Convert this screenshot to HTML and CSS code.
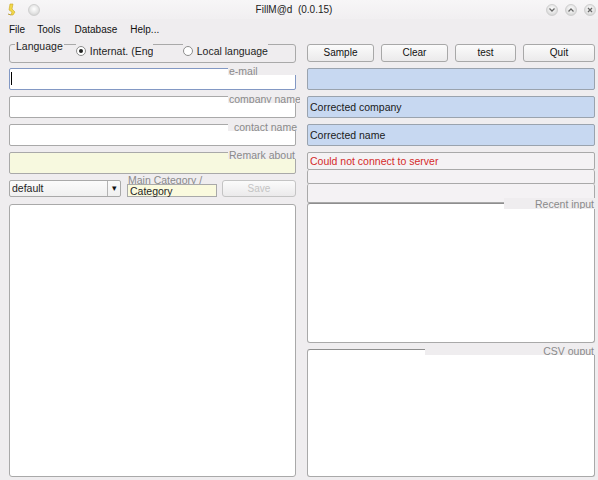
FILE: index.html
```html
<!DOCTYPE html>
<html>
<head>
<meta charset="utf-8">
<link rel="stylesheet" href="styles.css">
</head>
<body>
<div class="window">
  <div class="titlebar">
    <div class="tb-left">
      <svg class="app-icon" width="10" height="13" viewBox="0 0 10 13">
        <path d="M3 1 L6 1 L5 6 L8 9 L6 12 L4 12 L5 9 L2 7 Z" fill="#f2d84a" stroke="#c9a825" stroke-width="0.6"/>
        <path d="M1 11 L4 12" stroke="#b89b3a" stroke-width="1"/>
      </svg>
      <span class="roundbtn"></span>
    </div>
    <div class="title">FillM@d&nbsp;&nbsp;(0.0.15)</div>
    <div class="tb-right">
      <span class="roundbtn"><svg width="8" height="8" viewBox="0 0 8 8"><path d="M1.5 2.5 L4 5 L6.5 2.5" fill="none" stroke="#666" stroke-width="1.3"/></svg></span>
      <span class="roundbtn"><svg width="8" height="8" viewBox="0 0 8 8"><path d="M1.5 5.5 L4 3 L6.5 5.5" fill="none" stroke="#666" stroke-width="1.3"/></svg></span>
      <span class="roundbtn"><svg width="8" height="8" viewBox="0 0 8 8"><path d="M2 2 L6 6 M6 2 L2 6" fill="none" stroke="#666" stroke-width="1.3"/></svg></span>
    </div>
  </div>
  <div class="menubar">
    <span>File</span><span>Tools</span><span>Database</span><span>Help...</span>
  </div>
  <div class="content">
    <div class="col left">
      <div class="langbox">
        <span class="legend">Language</span>
        <span class="radio radio-intl"><span class="dot checked"></span><span class="rtext">Internat. (English)</span></span>
        <span class="radio radio-local"><span class="dot"></span><span class="rtext">Local language</span></span>
      </div>
      <div class="field focus"><span class="caret"></span><span class="flabel">e-mail</span></div>
      <div class="field"><span class="flabel">company name</span></div>
      <div class="field"><span class="flabel lbl-contact">contact name</span></div>
      <div class="field remark"><span class="flabel">Remark about</span></div>
      <div class="catrow">
        <div class="select"><span class="sel-text">default</span><span class="sel-arrow">&#9662;</span></div>
        <div class="catwrap">
          <span class="catlabel">Main Category /</span>
          <div class="catinput">Category</div>
        </div>
        <div class="btn disabled">Save</div>
      </div>
      <div class="area big"></div>
    </div>
    <div class="col right">
      <div class="buttons">
        <div class="btn b-sample">Sample</div>
        <div class="btn b-clear">Clear</div>
        <div class="btn b-test">test</div>
        <div class="btn b-quit">Quit</div>
      </div>
      <div class="field blue"></div>
      <div class="field blue">Corrected company</div>
      <div class="field blue">Corrected name</div>
      <div class="status">Could not connect to server</div>
      <div class="status s2"></div>
      <div class="status s3"></div>
      <div class="area recent"><span class="alabel">Recent input</span></div>
      <div class="area csv"><span class="alabel csv-label">CSV ouput</span></div>
    </div>
  </div>
</div>
</body>
</html>
```
FILE: styles.css
```css
* { box-sizing: border-box; }
html, body { margin: 0; padding: 0; }
body {
  font-family: "Liberation Sans", Arial, sans-serif;
  font-size: 10.5px;
  color: #1e1e1e;
  background: #efedef;
}
.window {
  width: 598px;
  height: 480px;
  background: #efedef;
  overflow: hidden;
}
.titlebar {
  height: 19px;
  background: linear-gradient(#f7f6f7, #f1eff1);
  display: flex;
  align-items: center;
}
.tb-left {
  display: flex;
  align-items: center;
  padding-left: 7px;
  gap: 11px;
  width: 80px;
}
.title {
  flex: 1;
  text-align: center;
  font-size: 10px;
  color: #222;
  padding-right: 10px;
}
.tb-right {
  display: flex;
  gap: 7px;
  padding-right: 2px;
  width: 80px;
  justify-content: flex-end;
}
.roundbtn {
  width: 12px;
  height: 12px;
  border-radius: 50%;
  background: radial-gradient(circle at 50% 40%, #ffffff 0%, #e4e4e4 55%, #c8c8c8 100%);
  border: 1px solid #cfcfcf;
  display: flex;
  align-items: center;
  justify-content: center;
}
.menubar {
  height: 20px;
  display: flex;
  align-items: center;
  padding-left: 9px;
  font-size: 10px;
  color: #111;
}
.menubar span:nth-child(1) { margin-right: 12px; }
.menubar span:nth-child(2) { margin-right: 14px; }
.menubar span:nth-child(3) { margin-right: 13px; }
.content {
  display: flex;
  padding: 5px 3px 0 9px;
  gap: 11px;
}
.col {
  display: flex;
  flex-direction: column;
}
.left { width: 287px; }
.right { width: 288px; }

/* Language group */
.langbox {
  height: 19px;
  border: 1px solid #a9a9a9;
  border-radius: 3px;
  display: flex;
  align-items: flex-start;
  margin-bottom: 5px;
}
.legend {
  margin-top: -5px;
  margin-left: 5px;
  padding: 0 1px;
  background: #efedef;
  line-height: 12px;
}
.radio {
  display: flex;
  align-items: center;
  margin-top: -1px;
  height: 13px;
  background: #efedef;
  overflow: hidden;
  line-height: 12px;
}
.radio-intl { margin-left: 12px; width: 77px; }
.radio-local { margin-left: 30px; width: 85px; }
.dot {
  width: 10px;
  height: 10px;
  border-radius: 50%;
  border: 1px solid #8d8d8d;
  background: #fff;
  margin-right: 4px;
  flex: none;
  display: flex;
  align-items: center;
  justify-content: center;
}
.dot.checked::after {
  content: "";
  width: 4px;
  height: 4px;
  border-radius: 50%;
  background: #222;
}
.rtext { white-space: nowrap; }

/* Fields */
.field {
  position: relative;
  height: 22px;
  border: 1px solid #a9a9a9;
  border-radius: 2px;
  background: #fff;
  margin-bottom: 6px;
  padding-left: 2px;
  line-height: 20px;
}
.field.focus { border-color: #8298c4; }
.caret {
  position: absolute;
  left: 1px;
  top: 3px;
  width: 1px;
  height: 13px;
  background: #000;
}
.field.remark { background: #f7f9df; }
.flabel {
  position: absolute;
  top: -4px;
  left: 218px;
  width: 72px;
  height: 10px;
  overflow: hidden;
  line-height: 12px;
  padding-left: 1px;
  background: #efedef;
  color: #8a8a8a;
  white-space: nowrap;
}
.flabel.lbl-contact { padding-left: 6px; width: 70px; }
.field.blue {
  background: #c7d8f1;
  border-color: #9aa3ae;
  color: #1a1a1a;
}

/* category row */
.catrow {
  display: flex;
  height: 18px;
  margin-bottom: 6px;
  align-items: flex-start;
}
.select {
  width: 112px;
  height: 17px;
  border: 1px solid #a9a9a9;
  border-radius: 2px;
  background: linear-gradient(#fbfbfb, #f0f0f0);
  display: flex;
  line-height: 15px;
}
.sel-text { flex: 1; padding-left: 2px; }
.sel-arrow {
  width: 13px;
  border-left: 1px solid #b4b4b4;
  text-align: center;
  font-size: 9px;
  color: #111;
}
.catwrap {
  width: 90px;
  margin-left: 6px;
  margin-top: -6px;
  display: flex;
  flex-direction: column;
}
.catlabel {
  height: 10px;
  line-height: 12px;
  overflow: hidden;
  color: #8a8a8a;
  white-space: nowrap;
  padding-left: 1px;
}
.catinput {
  height: 13px;
  border: 1px solid #a9a9a9;
  background: #fafade;
  line-height: 12px;
  padding-left: 2px;
}
.btn {
  height: 18px;
  border: 1px solid #a8a8a8;
  border-radius: 3px;
  background: linear-gradient(#fbfbfb, #ebeaeb);
  text-align: center;
  line-height: 16px;
  font-size: 10px;
  color: #111;
}
.catrow .btn {
  width: 74px;
  margin-left: auto;
  height: 17px;
  line-height: 15px;
}
.btn.disabled { color: #c4c4c4; border-color: #c4c4c4; }
.area {
  position: relative;
  border: 1px solid #a9a9a9;
  border-radius: 3px;
  background: #fff;
}
.area.big { height: 273px; }

/* right column */
.buttons {
  display: flex;
  gap: 7px;
  height: 18px;
  margin-bottom: 6px;
}
.b-sample, .b-clear { width: 67px; }
.b-test { width: 61px; }
.b-quit { flex: 1; }
.status {
  height: 18px;
  border: 1px solid #a9a9a9;
  border-radius: 2px;
  background: #f4f2f4;
  color: #d42a2a;
  line-height: 16px;
  padding-left: 2px;
}
.status.s2 { height: 14px; border-top: none; }
.status.s3 { height: 19px; border-top: none; }
.area.recent { height: 140px; margin-bottom: 6px; border-top-color: #8e8e8e; }
.area.csv { height: 128px; border-top-color: #8e8e8e; }
.alabel {
  position: absolute;
  right: -1px;
  top: -6px;
  width: 91px;
  height: 11px;
  line-height: 12px;
  overflow: hidden;
  text-align: right;
  padding-right: 1px;
  background: #efedef;
  color: #8a8a8a;
  white-space: nowrap;
}
.alabel.csv-label { width: 170px; top: -5px; height: 10px; }
```
